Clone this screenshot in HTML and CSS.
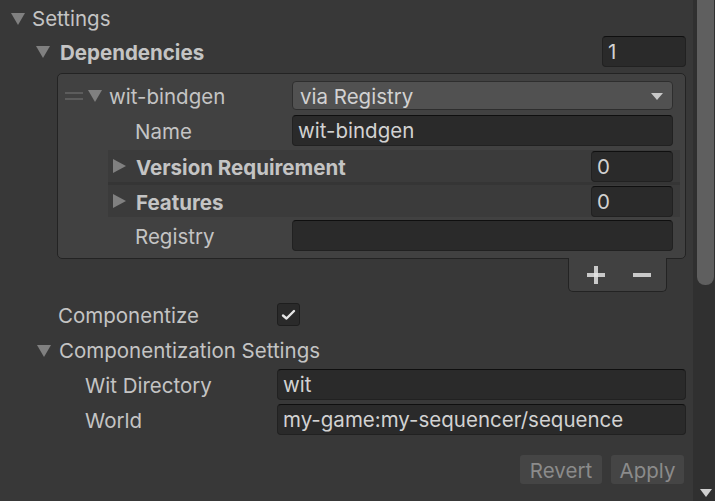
FILE: index.html
```html
<!DOCTYPE html>
<html>
<head>
<meta charset="utf-8">
<link rel="stylesheet" href="styles.css">
</head>
<body>
<div class="window">
  <main class="inspector">
    <div class="row settings-row">
      <span class="tri down"></span><span class="label">Settings</span>
    </div>
    <div class="row deps-row">
      <span class="tri down"></span><span class="label bold">Dependencies</span>
      <div class="field count">1</div>
    </div>

    <section class="list">
      <div class="row item-head">
        <span class="handle"></span><span class="tri down"></span><span class="label">wit-bindgen</span>
        <div class="dropdown"><span class="dd-text">via Registry</span><span class="caret"></span></div>
      </div>
      <div class="row prop name-row">
        <span class="label">Name</span>
        <div class="field wide">wit-bindgen</div>
      </div>
      <div class="bands">
        <div class="row band">
          <span class="tri right"></span><span class="label bold">Version Requirement</span>
          <div class="field small">0</div>
        </div>
        <div class="row band">
          <span class="tri right"></span><span class="label bold">Features</span>
          <div class="field small">0</div>
        </div>
      </div>
      <div class="row prop registry-row">
        <span class="label">Registry</span>
        <div class="field wide"></div>
      </div>
    </section>
    <div class="list-footer">
      <div class="footer-tab">
        <svg class="pm" width="18" height="18" viewBox="0 0 18 18"><rect x="0" y="7" width="18" height="4" fill="#c9c9c9"/><rect x="7" y="0" width="4" height="18" fill="#c9c9c9"/><rect x="7" y="7" width="4" height="4" fill="#e0e0e0"/></svg>
        <svg class="pm" width="18" height="18" viewBox="0 0 18 18"><rect x="0" y="7" width="18" height="4" fill="#c9c9c9"/></svg>
      </div>
    </div>

    <div class="row outer-prop comp-row">
      <span class="label">Componentize</span>
      <div class="check-cell">
        <span class="checkbox"><svg width="15" height="12" viewBox="0 0 15 12"><path d="M2 6.5 L5.5 9.5 L13 2" fill="none" stroke="#e6e6e6" stroke-width="2.4" stroke-linecap="round" stroke-linejoin="round"/></svg></span>
      </div>
    </div>
    <div class="row comp-settings-row">
      <span class="tri down"></span><span class="label">Componentization Settings</span>
    </div>
    <div class="row outer-prop nested">
      <span class="label">Wit Directory</span>
      <div class="field outer">wit</div>
    </div>
    <div class="row outer-prop nested">
      <span class="label">World</span>
      <div class="field outer">my-game:my-sequencer/sequence</div>
    </div>

    <div class="buttons">
      <span class="btn revert">Revert</span>
      <span class="btn apply">Apply</span>
    </div>
  </main>
  <aside class="scrollbar">
    <div class="thumb"></div>
    <div class="spacer"></div>
    <div class="arrow-down"></div>
  </aside>
</div>
</body>
</html>
```
FILE: styles.css
```css
* { box-sizing: border-box; }
html, body { margin: 0; padding: 0; }
body {
  background: #383838;
  font-family: Inter, "Noto Sans", "Liberation Sans", sans-serif;
  font-size: 20.5px;
  color: #c4c4c4;
  overflow: hidden;
}
.window {
  display: flex;
  width: 715px;
  height: 501px;
  overflow: hidden;
}
.inspector {
  flex: 1;
  display: flex;
  flex-direction: column;
  padding: 2px 7px 0 0;
  min-width: 0;
}
.row {
  display: flex;
  align-items: center;
  height: 31px;
  white-space: nowrap;
}
.label { flex: 1; min-width: 0; padding-top: 2px; }
.bold { font-weight: 700; }

.tri { flex: none; width: 0; height: 0; }
.tri.down {
  border-left: 7px solid transparent;
  border-right: 7px solid transparent;
  border-top: 12px solid #808080;
}
.tri.right {
  border-top: 7.5px solid transparent;
  border-bottom: 7.5px solid transparent;
  border-left: 13px solid #808080;
}

.settings-row { padding-left: 11px; }
.settings-row .tri { margin-right: 7px; margin-top: 2px; }
.deps-row { margin-top: 3px; padding-left: 36px; }
.deps-row .tri { margin-right: 10px; margin-top: 1px; }

.field {
  flex: none;
  height: 31px;
  background: #2a2a2a;
  border: 1px solid #212121;
  border-top-color: #0f0f0f;
  border-radius: 4px;
  color: #d2d2d2;
  padding-left: 5px;
  line-height: 30px;
  overflow: hidden;
}
.field.count { width: 84px; }
.field.wide { width: 381px; }
.field.small { width: 82px; }
.field.outer { width: 409px; }

/* reorderable list */
.list {
  margin: 6px 0 0 57px;
  background: #414141;
  border: 1px solid #232323;
  border-radius: 5px;
  padding: 7px 5px 7px 0;
  display: flex;
  flex-direction: column;
}
.list .row { padding-right: 7px; }
.item-head { height: 29px; padding-left: 7px; margin-bottom: 5px; }
.handle {
  flex: none;
  width: 18px;
  height: 8px;
  border-top: 2px solid #5c5c5c;
  border-bottom: 2px solid #5c5c5c;
  margin-right: 5px;
}
.item-head .tri { margin-right: 7px; margin-top: 1px; }
.dropdown {
  flex: none;
  width: 381px;
  height: 29px;
  background: #515151;
  border: 1px solid #2e2e2e;
  border-radius: 4px;
  display: flex;
  align-items: center;
  justify-content: space-between;
  padding: 0 9px 0 7px;
  color: #d2d2d2;
}
.dd-text { padding-top: 2px; }
.caret {
  width: 0; height: 0;
  border-left: 6.5px solid transparent;
  border-right: 6.5px solid transparent;
  border-top: 7px solid #c8c8c8;
  margin-top: 2px;
}
.prop { padding-left: 77px; }
.name-row { margin-bottom: 4px; }
.bands {
  display: flex;
  flex-direction: column;
  gap: 3px;
  margin-left: 50px;
  background: #353535;
}
.band {
  height: 32px;
  background: #3b3b3b;
  padding-left: 5px;
}
.band .tri { margin-right: 10px; }
.registry-row { margin-top: 3px; }

.list-footer {
  display: flex;
  justify-content: flex-end;
  margin: -1px 19px 0 0;
  position: relative;
}
.footer-tab {
  width: 99px;
  height: 34px;
  background: #414141;
  border: 1px solid #232323;
  border-top: none;
  border-radius: 0 0 5px 5px;
  display: flex;
  align-items: center;
  padding: 0 15px 0 18px;
  justify-content: space-between;
}
.pm { display: block; margin-top: 1px; }

.outer-prop { padding-left: 58px; }
.comp-row { margin-top: 7px; }
.check-cell { width: 409px; flex: none; display: flex; }
.checkbox {
  width: 23px;
  height: 23px;
  background: #2a2a2a;
  border: 1px solid #1e1e1e;
  border-radius: 3px;
  display: flex;
  align-items: center;
  justify-content: center;
}
.comp-settings-row { margin-top: 4px; padding-left: 37px; }
.comp-settings-row .tri { margin-right: 8px; margin-top: 2px; }
.nested { padding-left: 85px; margin-top: 4px; }

.buttons {
  display: flex;
  justify-content: flex-end;
  gap: 9px;
  margin: 20px 2px 0 0;
}
.btn {
  height: 29px;
  line-height: 31px;
  background: #454545;
  border-radius: 3px;
  color: #8b8b8b;
  text-align: center;
}
.revert { width: 82px; }
.apply { width: 73px; }

.scrollbar {
  flex: none;
  width: 22px;
  background: #303030;
  display: flex;
  flex-direction: column;
  align-items: flex-end;
  padding-right: 1px;
}
.thumb {
  width: 17px;
  height: 285px;
  background: #5f5f5f;
  border-radius: 0 0 8px 8px;
}
.spacer { flex: 1; }
.arrow-down {
  width: 0; height: 0;
  border-left: 6.5px solid transparent;
  border-right: 6.5px solid transparent;
  border-top: 8px solid #d0d0d0;
  margin: 0 2px 4px 0;
}
```
